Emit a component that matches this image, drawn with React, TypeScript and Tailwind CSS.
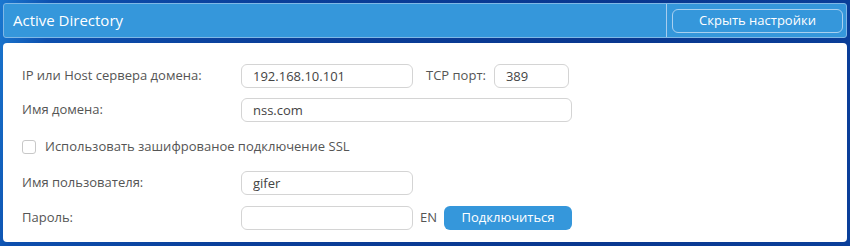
import { useState } from 'react'

function Field({ value, className = '' }: { value: string; className?: string }) {
  return (
    <input
      defaultValue={value}
      className={`h-[24px] rounded-[6px] border border-[#d4d4d4] bg-white px-[11px] text-[13px] text-[#444] outline-none ${className}`}
    />
  )
}

function Label({ children }: { children: React.ReactNode }) {
  return <div className="w-[219px] shrink-0 text-[13px] text-[#555]">{children}</div>
}

export default function App() {
  const [ssl, setSsl] = useState(false)
  return (
    <div
      className="h-[246px] w-[850px] bg-[linear-gradient(100deg,#1a78d0_0%,#0d4fae_6%,#0a3f9a_30%,#09378f_70%,#0a3f9a_100%)] p-[3px] pb-0 font-['Segoe_UI','Open_Sans',sans-serif]"
    >
      <div className="flex h-[35px] items-center rounded-[3px] border border-[#7fb8e6] bg-[#3597db]">
        <div className="flex-1 pl-[9px] text-[15px] text-white">Active Directory</div>
        <div className="flex h-full items-center border-l border-[#a8cdee] pl-[5px] pr-[3px]">
          <button className="h-[24px] w-[171px] rounded-[6px] border border-[#a9d0f0] text-[13px] text-white">
            Скрыть настройки
          </button>
        </div>
      </div>
      <div className="mt-[5px] h-[199px] rounded-[4px] bg-white pl-[19px] pt-[21px]">
        <div className="flex items-center">
          <Label>IP или Host сервера домена:</Label>
          <Field value="192.168.10.101" className="w-[172px]" />
          <span className="ml-[13px] mr-[8px] text-[13px] text-[#555]">TCP порт:</span>
          <Field value="389" className="w-[75px]" />
        </div>
        <div className="mt-[10px] flex items-center">
          <Label>Имя домена:</Label>
          <Field value="nss.com" className="w-[331px]" />
        </div>
        <label className="mt-[15px] flex items-center text-[13px] text-[#555]">
          <input
            type="checkbox"
            checked={ssl}
            onChange={(e) => setSsl(e.target.checked)}
            className="mr-[9px] h-[14px] w-[14px] appearance-none rounded-[3px] border border-[#c8c8c8]"
          />
          Использовать зашифрованое подключение SSL
        </label>
        <div className="mt-[14px] flex items-center">
          <Label>Имя пользователя:</Label>
          <Field value="gifer" className="w-[172px]" />
        </div>
        <div className="mt-[11px] flex items-center">
          <Label>Пароль:</Label>
          <Field value="" className="w-[172px]" />
          <span className="ml-[7px] mr-[7px] text-[13px] text-[#555]">EN</span>
          <button className="h-[24px] w-[128px] rounded-[6px] bg-[#3597db] text-[13px] text-white">
            Подключиться
          </button>
        </div>
      </div>
    </div>
  )
}
